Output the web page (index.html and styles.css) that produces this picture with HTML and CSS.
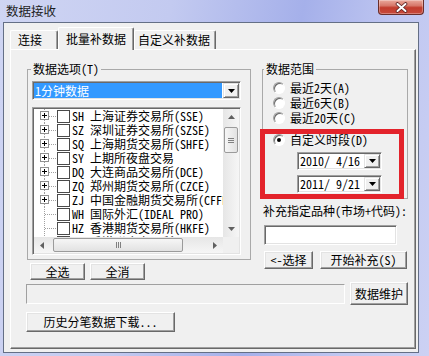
FILE: index.html
```html
<!DOCTYPE html>
<html>
<head>
<meta charset="utf-8">
<link rel="stylesheet" href="styles.css">
</head>
<body>
<svg class="defs" width="0" height="0">
  <symbol id="node" viewBox="0 0 17 14">
    <path d="M4.5 0v2M4.5 11v3M9 7.5h8" stroke="#a0a0a0" stroke-dasharray="1 1" fill="none"/>
    <rect x="0.5" y="2.5" width="8" height="8" fill="#fff" stroke="#919191"/>
    <path d="M2 6.5h5M4.5 4v5" stroke="#000"/>
  </symbol>
  <symbol id="leaf" viewBox="0 0 17 14">
    <path d="M4.5 0v14M5 7.5h12" stroke="#a0a0a0" stroke-dasharray="1 1" fill="none"/>
  </symbol>
</svg>
<div class="window">
  <div class="titlebar">
    <span class="title">数据接收</span>
    <div class="close">
      <svg width="15" height="11" viewBox="0 0 15 11"><path d="M3.5 2l8 7M11.5 2l-8 7" stroke="#5b2323" stroke-width="3.6" stroke-linecap="round"/><path d="M3.5 2l8 7M11.5 2l-8 7" stroke="#fff" stroke-width="2" stroke-linecap="round"/></svg>
    </div>
  </div>
  <div class="client">
    <div class="tabs">
      <div class="tab tab1">连接</div>
      <div class="tab tab-active">批量补数据</div>
      <div class="tab tab3">自定义补数据</div>
    </div>
    <div class="panel">
      <div class="top">
        <div class="col-left">
          <fieldset class="group group-data">
            <legend>数据选项(T)</legend>
            <div class="combo">
              <div class="combo-value">1分钟数据</div>
              <div class="drop-btn"><svg width="7" height="4" viewBox="0 0 7 4"><path d="M0 0h7L3.5 4z" fill="#000"/></svg></div>
            </div>
            <div class="listbox">
              <div class="list-rows">
                <div class="row"><svg class="tl"><use href="#node"/></svg><span class="cb"></span><span class="txt">SH 上海证券交易所(SSE)</span></div>
                <div class="row"><svg class="tl"><use href="#node"/></svg><span class="cb"></span><span class="txt">SZ 深圳证券交易所(SZSE)</span></div>
                <div class="row"><svg class="tl"><use href="#node"/></svg><span class="cb"></span><span class="txt">SQ 上海期货交易所(SHFE)</span></div>
                <div class="row"><svg class="tl"><use href="#node"/></svg><span class="cb"></span><span class="txt">SY 上期所夜盘交易</span></div>
                <div class="row"><svg class="tl"><use href="#node"/></svg><span class="cb"></span><span class="txt">DQ 大连商品交易所(DCE)</span></div>
                <div class="row"><svg class="tl"><use href="#node"/></svg><span class="cb"></span><span class="txt">ZQ 郑州期货交易所(CZCE)</span></div>
                <div class="row"><svg class="tl"><use href="#node"/></svg><span class="cb"></span><span class="txt">ZJ 中国金融期货交易所(CFFEX)</span></div>
                <div class="row"><svg class="tl"><use href="#leaf"/></svg><span class="cb"></span><span class="txt">WH 国际外汇(IDEAL PRO)</span></div>
                <div class="row"><svg class="tl"><use href="#leaf"/></svg><span class="cb"></span><span class="txt">HZ 香港期货交易所(HKFE)</span></div>
                <div class="row"><svg class="tl"><use href="#leaf"/></svg><span class="cb"></span><span class="txt">HK 香港联合交易所(HKEX)</span></div>
              </div>
              <div class="vscroll">
                <div class="arrow"><svg width="7" height="4" viewBox="0 0 7 4"><path d="M0 4h7L3.5 0z" fill="#606060"/></svg></div>
                <div class="vthumb"><i class="grip-h"></i></div>
                <div class="arrow arrow-end"><svg width="7" height="4" viewBox="0 0 7 4"><path d="M0 0h7L3.5 4z" fill="#606060"/></svg></div>
              </div>
              <div class="hscroll">
                <div class="arrow"><svg width="4" height="7" viewBox="0 0 4 7"><path d="M4 0v7L0 3.5z" fill="#606060"/></svg></div>
                <div class="hthumb"><i class="grip-v"></i></div>
                <div class="arrow arrow-end"><svg width="4" height="7" viewBox="0 0 4 7"><path d="M0 0v7L4 3.5z" fill="#606060"/></svg></div>
              </div>
              <div class="corner"></div>
            </div>
          </fieldset>
          <div class="btn-row">
            <button class="btn btn-all">全选</button>
            <button class="btn btn-none">全消</button>
          </div>
        </div>
        <div class="col-right">
          <fieldset class="group group-range">
            <legend>数据范围</legend>
            <div class="radio-row"><span class="radio"></span><span>最近2天(A)</span></div>
            <div class="radio-row"><span class="radio"></span><span>最近6天(B)</span></div>
            <div class="radio-row"><span class="radio"></span><span>最近20天(C)</span></div>
            <div class="radio-row radio-custom"><span class="radio checked"></span><span>自定义时段(D)</span></div>
            <div class="datebox"><span class="date-text">2010/ 4/16</span><div class="drop-btn"><svg width="7" height="4" viewBox="0 0 7 4"><path d="M0 0h7L3.5 4z" fill="#000"/></svg></div></div>
            <div class="datebox datebox2"><span class="date-text">2011/ 9/21</span><div class="drop-btn"><svg width="7" height="4" viewBox="0 0 7 4"><path d="M0 0h7L3.5 4z" fill="#000"/></svg></div></div>
          </fieldset>
          <div class="label">补充指定品种(市场+代码):</div>
          <div class="textbox"></div>
          <div class="btn-row2">
            <button class="btn btn-pick">&lt;-选择</button>
            <button class="btn btn-start">开始补充(S)</button>
          </div>
          <div class="highlight"></div>
        </div>
      </div>
      <div class="status-row">
        <div class="status"></div>
        <button class="btn btn-maint">数据维护</button>
      </div>
      <button class="btn btn-hist">历史分笔数据下载...</button>
    </div>
  </div>
</div>
</body>
</html>
```

FILE: styles.css
```css
* { box-sizing: border-box; }

body {
  margin: 0;
  width: 429px;
  height: 356px;
  overflow: hidden;
  background: linear-gradient(100deg, #cfd5f3 0%, #c3caf0 35%, #a5b0ea 62%, #c0c7f1 82%, #ccd1f3 100%);
  font-family: "Noto Sans Mono CJK SC", "Noto Sans CJK SC", "DejaVu Sans Mono", monospace;
  font-size: 12px;
  line-height: 14px;
  color: #000;
}

.defs { position: absolute; }

.titlebar {
  height: 22px;
  display: flex;
  justify-content: space-between;
  align-items: flex-start;
}

.title {
  margin: 4px 0 0 6px;
  font-family: "Noto Sans CJK SC", sans-serif;
  font-size: 12.5px;
  line-height: 14px;
  color: #1e1e1e;
}

.close {
  width: 46px;
  height: 15px;
  margin-right: 5px;
  border: 1px solid #6a2e2a;
  border-top: none;
  border-radius: 0 0 4px 4px;
  background: linear-gradient(#eaa99c 0%, #d7786a 40%, #c23c2d 55%, #c74a3c 100%);
  box-shadow: inset 0 0 0 1px rgba(255, 255, 255, 0.3);
  display: flex;
  align-items: center;
  justify-content: center;
}

.client {
  margin-left: 3px;
  width: 416px;
  height: 331px;
  border: 1px solid #646f86;
  background: #f0f0f0;
  padding: 4px 2px 3px 6px;
}

.tabs {
  display: flex;
  align-items: flex-end;
  height: 22px;
}

.tab {
  height: 19px;
  background: #f0f0f0;
  border-top: 1px solid #fff;
  border-left: 1px solid #fff;
  border-right: 1px solid #696969;
  box-shadow: inset -1px 0 #a0a0a0;
  border-radius: 2px 2px 0 0;
  padding-top: 2px;
  white-space: nowrap;
}

.tab1 { width: 48px; padding-left: 7px; }
.tab3 { width: 82px; padding-left: 3px; }

.tab-active {
  width: 76px;
  height: 23px;
  margin-bottom: -1px;
  padding-left: 7px;
  padding-top: 4px;
  position: relative;
  z-index: 1;
}

.panel {
  height: 300px;
  border: 1px solid;
  border-color: #fff #696969 #696969 #fff;
  box-shadow: inset -1px -1px #a0a0a0;
  padding: 12px 0 0 15px;
}

.top { display: flex; align-items: flex-start; }

.col-left { width: 225px; padding-left: 1px; }

.col-right {
  width: 146px;
  margin-left: 11px;
  position: relative;
}

.group {
  margin: 0;
  border: 1px solid #a9a9a9;
  min-width: 0;
}

.group legend {
  padding: 0 2px;
  height: 14px;
  line-height: 14px;
  white-space: nowrap;
}

.group-data {
  width: 224px;
  padding: 0 4px 4px 4px;
}
.group-data legend { margin-left: -1px; }

.group-range {
  width: 146px;
  padding: 0 4px 5px 10px;
}
.group-range legend { margin-left: -9px; }

.combo {
  margin-top: 5px;
  width: 209px;
  height: 19px;
  display: flex;
  border: 1px solid;
  border-color: #a0a0a0 #fff #fff #a0a0a0;
  box-shadow: inset 1px 1px #696969, inset -1px -1px #e3e3e3;
  padding: 1px;
  background: #fff;
}

.combo-value {
  flex: 1;
  background: #3399ff;
  color: #fff;
  padding-left: 1px;
  line-height: 15px;
  margin-right: 1px;
}

.drop-btn {
  width: 16px;
  height: 15px;
  background: #f0f0f0;
  border: 1px solid;
  border-color: #e3e3e3 #696969 #696969 #e3e3e3;
  box-shadow: inset 1px 1px #fff, inset -1px -1px #a0a0a0;
  display: flex;
  align-items: center;
  justify-content: center;
}

.listbox {
  margin-top: 7px;
  width: 209px;
  height: 148px;
  border: 1px solid;
  border-color: #a0a0a0 #fff #fff #a0a0a0;
  box-shadow: inset 1px 1px #696969, inset -1px -1px #e3e3e3;
  padding: 1px;
  display: grid;
  grid-template-columns: 1fr 16px;
  grid-template-rows: 1fr 16px;
}

.list-rows {
  background: #fff;
  overflow: hidden;
  padding: 0 0 0 6px;
  min-height: 0;
}

.row {
  height: 14px;
  display: flex;
  align-items: center;
}

.tl { width: 17px; height: 14px; flex: none; }

.cb {
  width: 13px;
  height: 13px;
  flex: none;
  border: 1px solid #4a4a4a;
  background: #fff;
}

.txt { margin-left: 2px; line-height: 14px; white-space: pre; }

.vscroll {
  background: linear-gradient(90deg, #e6e6e6, #f6f6f6);
  display: flex;
  flex-direction: column;
  align-items: center;
  min-height: 0;
}

.hscroll {
  background: linear-gradient(#e6e6e6, #f6f6f6);
  display: flex;
  align-items: center;
}

.arrow {
  width: 16px;
  height: 16px;
  display: flex;
  align-items: center;
  justify-content: center;
  flex: none;
}

.arrow-end { margin-top: auto; }
.hscroll .arrow-end { margin-top: 0; margin-left: auto; }

.vthumb {
  margin-top: 2px;
  width: 14px;
  height: 26px;
  flex: none;
  border: 1px solid #9b9b9b;
  border-radius: 2px;
  background: linear-gradient(90deg, #f6f6f6, #e2e2e2);
  display: flex;
  align-items: center;
  justify-content: center;
}

.hthumb {
  margin-left: 3px;
  width: 130px;
  height: 14px;
  flex: none;
  border: 1px solid #9b9b9b;
  border-radius: 2px;
  background: linear-gradient(#f6f6f6, #e2e2e2);
  display: flex;
  align-items: center;
  justify-content: center;
}

.grip-h {
  width: 6px;
  height: 1px;
  background: #808080;
  box-shadow: 0 -2px #808080, 0 2px #808080;
}

.grip-v {
  width: 1px;
  height: 6px;
  background: #808080;
  box-shadow: -2px 0 #808080, 2px 0 #808080;
}

.corner { background: #f0f0f0; }

.btn {
  margin: 0;
  padding: 0;
  font: inherit;
  color: #000;
  background: #f0f0f0;
  border: 1px solid;
  border-color: #fff #696969 #696969 #fff;
  box-shadow: inset -1px -1px #a0a0a0, inset 1px 1px #e3e3e3;
  display: inline-flex;
  align-items: center;
  justify-content: center;
  white-space: pre;
}

.btn-row {
  margin-top: 3px;
  display: flex;
}

.btn-all { width: 55px; height: 17px; margin-left: 3px; }
.btn-none { width: 55px; height: 17px; margin-left: 5px; }

.radio-row {
  height: 15px;
  display: flex;
  align-items: center;
}
.group-range legend + .radio-row { margin-top: 4px; }
.radio-custom { margin-top: 7px; }

.radio {
  width: 12px;
  height: 12px;
  margin-right: 5px;
  border-radius: 50%;
  border: 1px solid;
  border-color: #a0a0a0 #fff #fff #a0a0a0;
  background: #fff;
  box-shadow: inset 1px 1px #696969;
  display: flex;
  align-items: center;
  justify-content: center;
}

.radio.checked::after {
  content: "";
  width: 4px;
  height: 4px;
  border-radius: 50%;
  background: #000;
}

.datebox {
  margin: 5px 0 0 24px;
  width: 85px;
  height: 18px;
  border: 1px solid;
  border-color: #a0a0a0 #fff #fff #a0a0a0;
  box-shadow: inset 1px 1px #696969, inset -1px -1px #e3e3e3;
  padding: 1px;
  background: #fff;
  display: flex;
  align-items: center;
}
.datebox2 { margin-top: 5px; }

.date-text { padding-left: 1px; flex: 1; white-space: pre; }

.datebox .drop-btn { height: 14px; }

.label {
  margin: 5px 0 0 1px;
  white-space: nowrap;
}

.textbox {
  margin: 7px 0 0 2px;
  width: 133px;
  height: 20px;
  border: 1px solid;
  border-color: #a0a0a0 #fff #fff #a0a0a0;
  box-shadow: inset 1px 1px #696969, inset -1px -1px #e3e3e3;
  background: #fff;
}

.btn-row2 {
  margin-top: 6px;
  display: flex;
}

.btn-pick { width: 49px; height: 18px; margin-left: 2px; }
.btn-start { width: 87px; height: 18px; margin-left: 7px; }

.highlight {
  position: absolute;
  left: -2px;
  top: 67px;
  width: 144px;
  height: 70px;
  border: 5px solid #e3232b;
}

.status-row {
  margin-top: 2px;
  display: flex;
  align-items: flex-start;
}

.status {
  margin-top: 2px;
  width: 319px;
  height: 20px;
  border: 1px solid;
  border-color: #a0a0a0 #fff #fff #a0a0a0;
}

.btn-maint { width: 58px; height: 23px; margin-left: 5px; }

.btn-hist {
  margin-top: 7px;
  width: 149px;
  height: 20px;
}
```
